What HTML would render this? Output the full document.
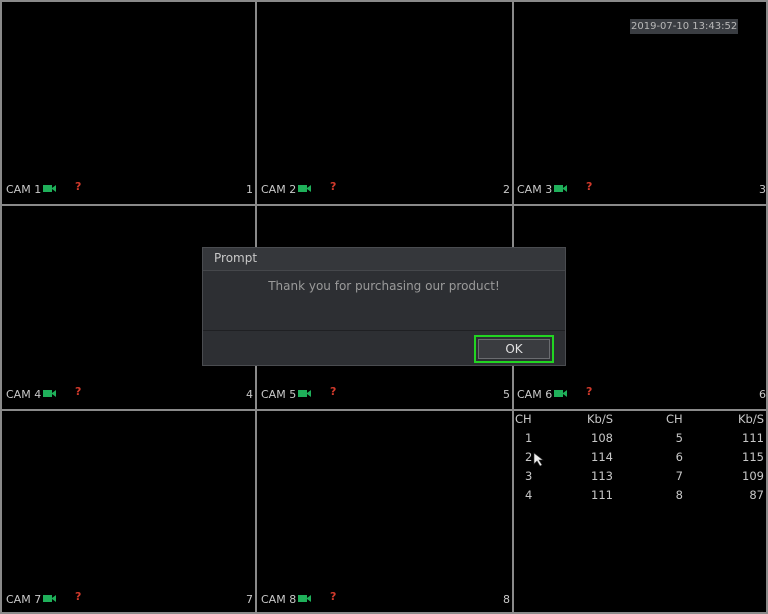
<!DOCTYPE html>
<html><head><style>
body{margin:0;width:768px;height:614px;background:#000;overflow:hidden;font-family:"DejaVu Sans","Liberation Sans",sans-serif;position:relative}
.l{position:absolute;background:#8a8a8a}
.t{position:absolute;color:#c8c8c8;font-size:11px;white-space:nowrap}
.cam{position:absolute;width:9px;height:7px;background:#1fb05a}
.cam:after{content:"";position:absolute;left:9px;top:0;border-right:4px solid #1fb05a;border-top:3px solid transparent;border-bottom:3px solid transparent;height:1px}
.q{position:absolute;color:#d0392b;font-size:11px;font-weight:bold}
.n{position:absolute;color:#c8c8c8;font-size:11px;text-align:right;width:30px}
.tb{font-size:11.5px}
</style></head><body>
<div class="l" style="left:0;top:0;width:768px;height:2px"></div>
<div class="l" style="left:0;top:612px;width:768px;height:2px"></div>
<div class="l" style="left:0;top:0;width:2px;height:614px"></div>
<div class="l" style="left:766px;top:0;width:2px;height:614px"></div>
<div class="l" style="left:255px;top:0;width:2px;height:614px"></div>
<div class="l" style="left:512px;top:0;width:2px;height:614px"></div>
<div class="l" style="left:0;top:204px;width:768px;height:2px"></div>
<div class="l" style="left:0;top:409px;width:768px;height:2px"></div>

<div class="t" style="left:630px;top:19px;background:#3a3d42;padding:2px 1px;font-size:10px;color:#b8b8b8">2019-07-10 13:43:52</div>

<div class="t" style="left:6px;top:183px">CAM 1</div><div class="cam" style="left:43px;top:185px"></div><div class="q" style="left:75px;top:180px">?</div><div class="n" style="left:223px;top:183px">1</div>
<div class="t" style="left:261px;top:183px">CAM 2</div><div class="cam" style="left:298px;top:185px"></div><div class="q" style="left:330px;top:180px">?</div><div class="n" style="left:480px;top:183px">2</div>
<div class="t" style="left:517px;top:183px">CAM 3</div><div class="cam" style="left:554px;top:185px"></div><div class="q" style="left:586px;top:180px">?</div><div class="n" style="left:736px;top:183px">3</div>
<div class="t" style="left:6px;top:388px">CAM 4</div><div class="cam" style="left:43px;top:390px"></div><div class="q" style="left:75px;top:385px">?</div><div class="n" style="left:223px;top:388px">4</div>
<div class="t" style="left:261px;top:388px">CAM 5</div><div class="cam" style="left:298px;top:390px"></div><div class="q" style="left:330px;top:385px">?</div><div class="n" style="left:480px;top:388px">5</div>
<div class="t" style="left:517px;top:388px">CAM 6</div><div class="cam" style="left:554px;top:390px"></div><div class="q" style="left:586px;top:385px">?</div><div class="n" style="left:736px;top:388px">6</div>
<div class="t" style="left:6px;top:593px">CAM 7</div><div class="cam" style="left:43px;top:595px"></div><div class="q" style="left:75px;top:590px">?</div><div class="n" style="left:223px;top:593px">7</div>
<div class="t" style="left:261px;top:593px">CAM 8</div><div class="cam" style="left:298px;top:595px"></div><div class="q" style="left:330px;top:590px">?</div><div class="n" style="left:480px;top:593px">8</div>

<div class="t tb" style="left:515px;top:412px">CH</div><div class="n tb" style="left:583px;top:412px;width:30px">Kb/S</div><div class="t tb" style="left:666px;top:412px">CH</div><div class="n tb" style="left:734px;top:412px">Kb/S</div>
<div class="t tb" style="left:525px;top:431px">1</div><div class="n tb" style="left:583px;top:431px">108</div><div class="n tb" style="left:653px;top:431px">5</div><div class="n tb" style="left:734px;top:431px">111</div>
<div class="t tb" style="left:525px;top:450px">2</div><div class="n tb" style="left:583px;top:450px">114</div><div class="n tb" style="left:653px;top:450px">6</div><div class="n tb" style="left:734px;top:450px">115</div>
<div class="t tb" style="left:525px;top:469px">3</div><div class="n tb" style="left:583px;top:469px">113</div><div class="n tb" style="left:653px;top:469px">7</div><div class="n tb" style="left:734px;top:469px">109</div>
<div class="t tb" style="left:525px;top:488px">4</div><div class="n tb" style="left:583px;top:488px">111</div><div class="n tb" style="left:653px;top:488px">8</div><div class="n tb" style="left:734px;top:488px">87</div>
<svg style="position:absolute;left:533px;top:452px" width="12" height="16"><path d="M1 1 L1 12 L4 9 L7 14 L9 13 L6 8 L10 8 Z" fill="#eee" stroke="#333" stroke-width="0.6"/></svg>

<div style="position:absolute;left:202px;top:247px;width:364px;height:119px;background:#2d2f33;border:1px solid #4a4c50;box-sizing:border-box">
<div style="height:22px;background:#35373b;border-bottom:1px solid #45474b;color:#c8c8c8;font-size:12px;line-height:21px;padding-left:11px">Prompt</div>
<div style="position:absolute;left:0;right:0;top:31px;text-align:center;color:#9a9a9a;font-size:12px">Thank you for purchasing our product!</div>
<div style="position:absolute;left:0;right:0;top:82px;height:1px;background:#1f2023"></div>
<div style="position:absolute;left:271px;top:87px;width:80px;height:28px;border:2px solid #22d422;box-sizing:border-box;padding:2px">
<div style="width:100%;height:100%;background:#3a3c40;border:1px solid #6a6c70;box-sizing:border-box;color:#e0e0e0;font-size:12px;text-align:center;line-height:18px">OK</div></div>
</div>
</body></html>
